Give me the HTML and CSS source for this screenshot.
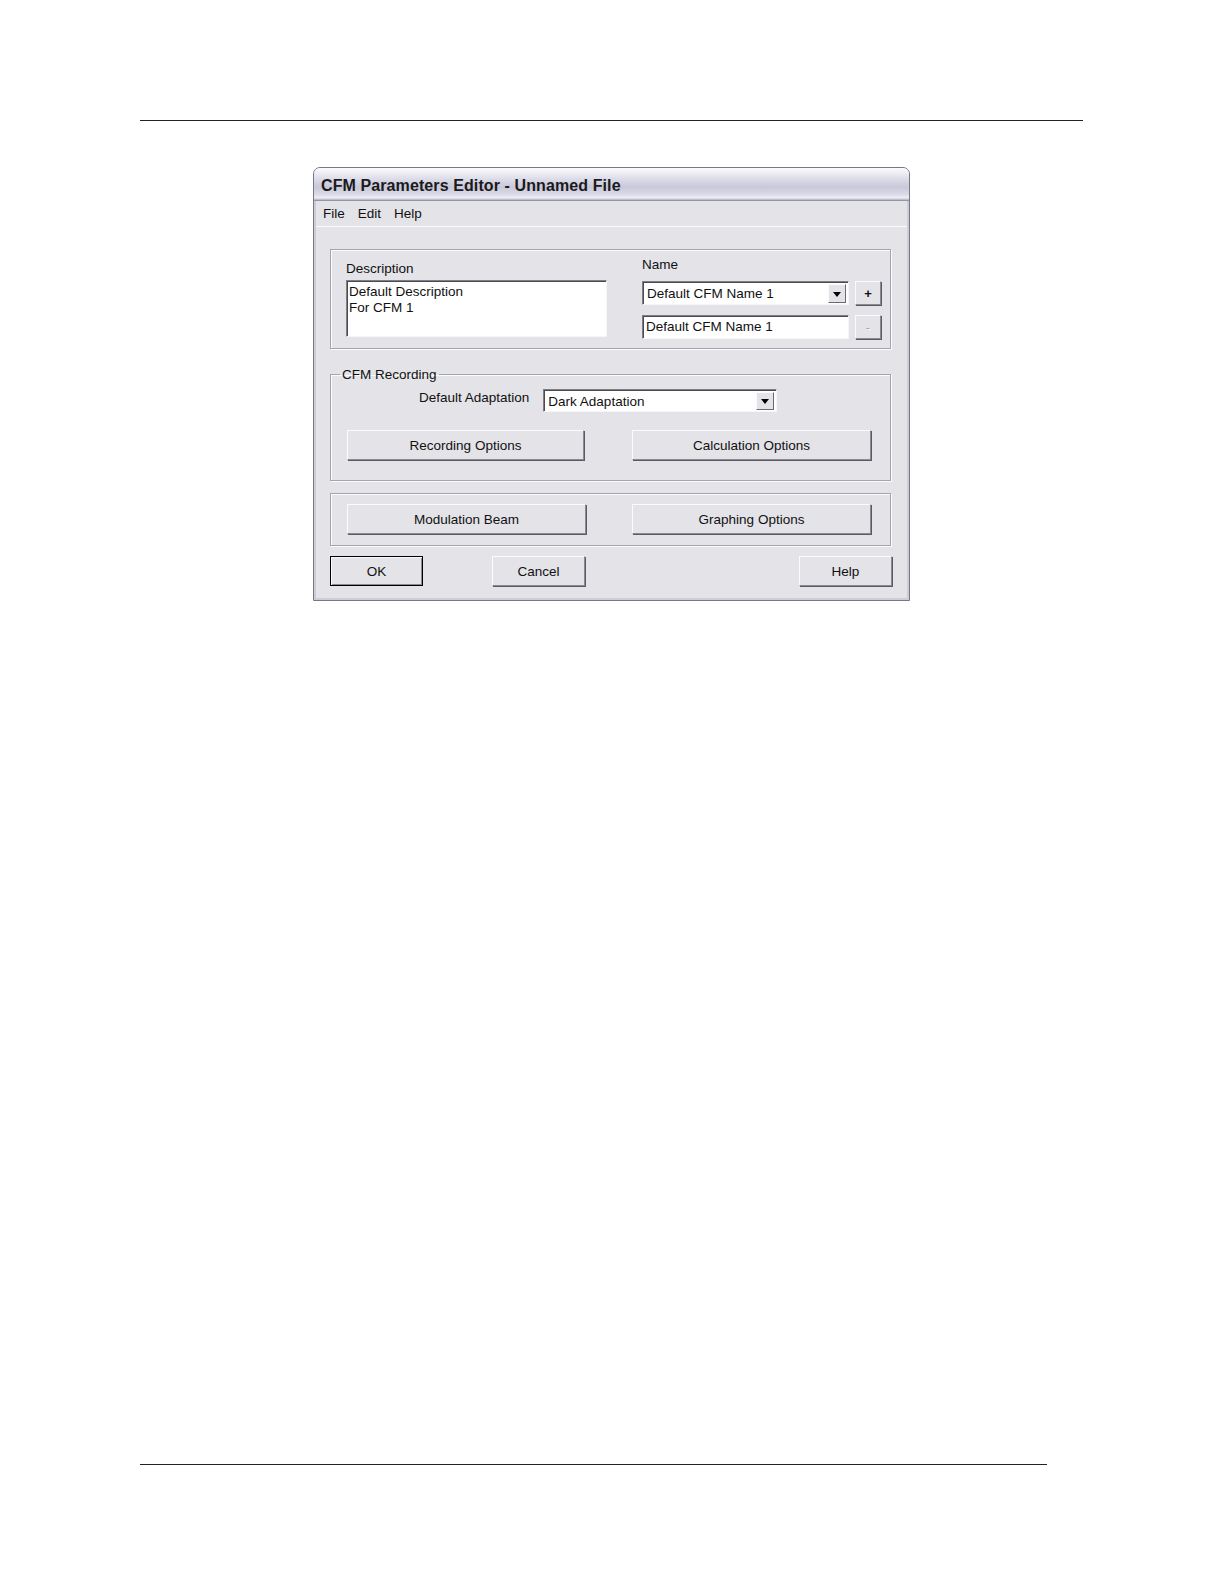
FILE: index.html
```html
<!DOCTYPE html>
<html>
<head>
<meta charset="utf-8">
<title>CFM Parameters Editor</title>
<link rel="stylesheet" href="styles.css">
</head>
<body>
<div class="page">
  <div class="rule rule-top"></div>
  <div class="dialog">
    <div class="titlebar">CFM Parameters Editor - Unnamed File</div>
    <div class="menubar">
      <span class="menu-item">File</span>
      <span class="menu-item">Edit</span>
      <span class="menu-item">Help</span>
    </div>
    <div class="client">
      <div class="group group-top">
        <div class="col col-desc">
          <div class="label">Description</div>
          <div class="textbox multiline">Default Description<br>For CFM 1</div>
        </div>
        <div class="col col-name">
          <div class="label">Name</div>
          <div class="field-row">
            <div class="textbox combo combo-name"><span class="combo-text">Default CFM Name 1</span><span class="combo-btn"><span class="arrow"></span></span></div>
            <div class="btn small-btn">+</div>
          </div>
          <div class="field-row">
            <div class="textbox single">Default CFM Name 1</div>
            <div class="btn small-btn disabled">-</div>
          </div>
        </div>
      </div>

      <fieldset class="group group-rec">
        <legend>CFM Recording</legend>
        <div class="adapt-row">
          <span class="adapt-label">Default Adaptation</span>
          <div class="textbox combo combo-adapt"><span class="combo-text">Dark Adaptation</span><span class="combo-btn"><span class="arrow"></span></span></div>
        </div>
        <div class="btn-row">
          <div class="btn wide-btn w237">Recording Options</div>
          <div class="btn wide-btn">Calculation Options</div>
        </div>
      </fieldset>

      <div class="group group-misc">
        <div class="btn-row gap46">
          <div class="btn wide-btn">Modulation Beam</div>
          <div class="btn wide-btn">Graphing Options</div>
        </div>
      </div>

      <div class="action-row">
        <div class="btn action-btn default-btn">OK</div>
        <div class="btn action-btn">Cancel</div>
        <div class="btn action-btn help-btn">Help</div>
      </div>
    </div>
  </div>
  <div class="rule rule-bottom"></div>
</div>
</body>
</html>
```
FILE: styles.css
```css
html, body {
  margin: 0;
  padding: 0;
  background: #ffffff;
}

body {
  font-family: "Liberation Sans", Arial, sans-serif;
  font-size: 13.5px;
  color: #111;
}

.page {
  padding-top: 120px;
  padding-left: 140px;
}

.rule {
  height: 1px;
  background: #222;
}

.rule-top {
  width: 943px;
}

.rule-bottom {
  width: 907px;
  margin-top: 863px;
}

.dialog {
  margin-top: 46px;
  margin-left: 173px;
  width: 597px;
  height: 434px;
  box-sizing: border-box;
  border: 1px solid #77778a;
  border-radius: 7px 7px 0 0;
  background: #e3e3e8;
  box-shadow: inset 0 0 0 2px #cdcdda;
  display: flex;
  flex-direction: column;
}

.titlebar {
  height: 33px;
  box-sizing: border-box;
  border-radius: 6px 6px 0 0;
  background: linear-gradient(to bottom, #fbfbfd 0%, #ebebf3 18%, #d2d2e2 46%, #c8c8da 60%, #dadae8 82%, #eeeef5 93%, #b2b2c6 100%);
  border-bottom: 1px solid #9494aa;
  padding: 3px 0 0 7px;
  display: flex;
  align-items: center;
  font-weight: bold;
  font-size: 16px;
  color: #1a1a1a;
  letter-spacing: 0.1px;
}

.menubar {
  height: 26px;
  box-sizing: border-box;
  border-bottom: 1px solid #fbfbfd;
  margin: 0 2px;
  padding-left: 7px;
  display: flex;
  align-items: center;
  gap: 13px;
}

.client {
  flex: 1;
  padding: 22px 17px 0 16px;
  display: flex;
  flex-direction: column;
}

.group {
  box-sizing: border-box;
  width: 561px;
  border: 1px solid #a4a4ae;
  box-shadow: 1px 1px 0 #fbfbfd, inset 1px 1px 0 #fbfbfd;
  margin: 0;
}

.group-top {
  height: 100px;
  display: flex;
  padding: 7px 0 0 15px;
  gap: 35px;
}

.label {
  height: 15px;
  line-height: 15px;
}

.col-desc {
  width: 261px;
  padding-top: 4px;
}

.col-desc .label {
  margin-bottom: 4px;
}

.col-name .label {
  margin-bottom: 9px;
}

.textbox {
  box-sizing: border-box;
  background: #fff;
  border: 1px solid;
  border-color: #7d7d85 #f6f6f8 #f6f6f8 #7d7d85;
  box-shadow: inset 1px 1px 0 #4a4a50;
}

.multiline {
  width: 261px;
  height: 57px;
  padding: 3px 2px;
  line-height: 16px;
}

.single {
  width: 207px;
  height: 24px;
  line-height: 21px;
  padding-left: 3px;
}

.field-row {
  display: flex;
  align-items: flex-start;
  gap: 6px;
  margin-bottom: 10px;
}

.combo {
  display: flex;
  align-items: stretch;
  height: 24px;
  padding: 2px 2px 1px 4px;
}

.combo-name {
  width: 207px;
}

.combo-adapt {
  width: 234px;
  height: 23px;
}

.combo-text {
  flex: 1;
  line-height: 19px;
}

.combo-btn {
  width: 18px;
  box-sizing: border-box;
  background: #e3e3e8;
  border: 1px solid;
  border-color: #fbfbfd #6a6a72 #6a6a72 #fbfbfd;
  display: flex;
  align-items: center;
  justify-content: center;
}

.arrow {
  width: 0;
  height: 0;
  border-left: 4px solid transparent;
  border-right: 4px solid transparent;
  border-top: 5px solid #000;
  margin-top: 1px;
}

.btn {
  box-sizing: border-box;
  background: #e3e3e8;
  border: 1px solid;
  border-color: #fbfbfd #8a8a94 #8a8a94 #fbfbfd;
  box-shadow: 1px 1px 0 #5a5a62;
  display: flex;
  align-items: center;
  justify-content: center;
  height: 30px;
}

.small-btn {
  width: 26px;
  height: 24px;
  font-size: 13px;
  font-weight: bold;
}

.disabled {
  color: #a8a8b0;
  font-weight: normal;
  text-shadow: 1px 1px 0 #fff;
}

.group-rec {
  margin-top: 18px;
  padding: 0;
  height: 114px;
  min-inline-size: 0;
}

.group-rec legend {
  margin-left: 9px;
  padding: 0 2px;
  line-height: 15px;
}

.adapt-row {
  display: flex;
  align-items: center;
  gap: 14px;
  margin-left: 88px;
  margin-top: 7px;
}

.adapt-label {
  line-height: 15px;
  margin-top: -6px;
}

.btn-row {
  display: flex;
  gap: 48px;
  padding-left: 16px;
}

.gap46 {
  gap: 46px;
}

.group-rec .btn-row {
  margin-top: 18px;
}

.wide-btn {
  width: 239px;
}

.w237 {
  width: 237px;
}

.group-misc {
  margin-top: 12px;
  height: 53px;
  padding-top: 10px;
}

.action-row {
  display: flex;
  margin-top: 10px;
  width: 562px;
}

.action-btn {
  width: 93px;
}

.default-btn {
  border: 1px solid #000;
  box-shadow: inset 1px 1px 0 #fbfbfd, inset -1px -1px 0 #8a8a94;
  margin-right: 69px;
}

.help-btn {
  margin-left: auto;
}
```
